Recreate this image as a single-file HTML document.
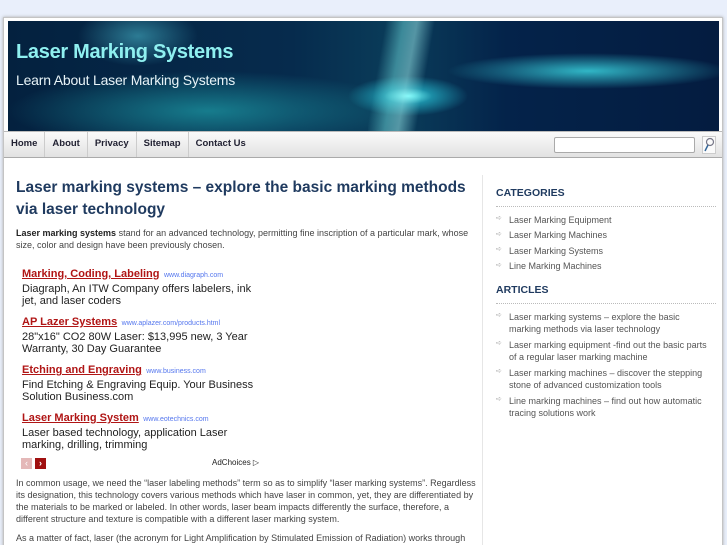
<!DOCTYPE html>
<html><head><meta charset="utf-8"><style>
*{margin:0;padding:0;box-sizing:border-box}
html,body{width:727px;height:545px;overflow:hidden}
body{background:#e9effb;font-family:"Liberation Sans",sans-serif;position:relative}
#wrap{position:absolute;left:3px;top:17px;width:720px;height:540px;background:#fff;border:1px solid #c4c4c4;border-bottom:none;box-shadow:0 0 3px #aaa}
#hdr{position:absolute;left:4px;top:3px;width:711px;height:111px;background:
radial-gradient(ellipse 60px 20px at 400px 75px,#7ff 0%,rgba(40,200,220,.6) 40%,transparent 100%),
radial-gradient(ellipse 200px 40px at 200px 90px,rgba(30,160,170,.7),transparent),
radial-gradient(ellipse 140px 18px at 580px 50px,rgba(60,220,230,.8),transparent),
radial-gradient(ellipse 60px 30px at 130px 15px,rgba(70,180,200,.6),transparent),
linear-gradient(90deg,#04213f,#062b4d 40%,#0a3d5a 55%,#04234a 70%,#041c40)}
#hdr .t{position:absolute;left:8px;top:20px;font-size:20px;color:#8ff0f0;font-weight:bold;letter-spacing:-.3px}
#hdr .s{position:absolute;left:8px;top:51px;font-size:14px;color:#e8f4f8;letter-spacing:-.2px}
#beam{position:absolute;left:360px;top:0;width:70px;height:111px;background:linear-gradient(100deg,transparent 20%,rgba(120,230,230,.45) 40%,rgba(160,240,240,.5) 55%,transparent 75%)}
#nav{position:absolute;left:0;top:113px;width:718px;height:27px;background:linear-gradient(#fafafa,#e2e2e2);border-top:1px solid #bbb;border-bottom:1px solid #aaa}
#nav a{float:left;height:25px;line-height:23px;font-size:9.5px;font-weight:bold;color:#223;padding:0 7px;border-right:1px solid #ccc;text-decoration:none}
#srch{position:absolute;left:550px;top:5px;width:141px;height:16px;background:#fff;border:1px solid #aaa;border-radius:2px}
#mag{position:absolute;left:698px;top:4px;width:14px;height:18px;background:#fafafa;border:1px solid #ccc}
#main{position:absolute;left:12px;top:159px;width:462px;color:#333}
h1{font-size:15.5px;color:#1f3a5f;line-height:22px;font-weight:bold}
p{font-size:9px;line-height:12px;color:#444}
.ad{margin-left:6px;margin-top:5px}
.ad a{font-size:11px;line-height:14px;color:#b01515;text-decoration:underline;font-weight:bold}
.ad span{font-size:7px;color:#5577ee}
.ad div{font-size:11px;color:#222;line-height:12px;width:235px;margin-top:1px}
#side{position:absolute;left:478px;top:157px;width:240px;height:390px;border-left:1px solid #e6e6e6}
#side h3{font-size:10.5px;color:#1f3a5f;margin:12px 0 0 13px;padding-bottom:7px;border-bottom:1px dotted #bbb;width:220px}
#side ul{list-style:none;margin:5px 0 0 13px}
#side li{font-size:9px;color:#555;line-height:12.5px;padding:1.5px 0 1.5px 13px;position:relative;width:212px}
#side li:before{content:"➪";position:absolute;left:0;top:1px;font-size:7px;color:#aaa}
</style></head><body>
<div id="wrap">
<div id="hdr"><div id="beam"></div><div class="t">Laser Marking Systems</div><div class="s">Learn About Laser Marking Systems</div></div>
<div id="nav"><a>Home</a><a>About</a><a>Privacy</a><a>Sitemap</a><a style="border:none">Contact Us</a><div id="srch"></div><div id="mag"><svg width="12" height="16"><circle cx="7" cy="5" r="3.5" fill="none" stroke="#778" stroke-width="1.2"/><path d="M5 8 L2 14" stroke="#369" stroke-width="1.5"/></svg></div></div>
<div id="main">
<h1>Laser marking systems – explore the basic marking methods via laser technology</h1>
<p style="margin-top:6px"><b style="color:#222">Laser marking systems</b> stand for an advanced technology, permitting fine inscription of a particular mark, whose size, color and design have been previously chosen.</p>
<div class="ad" style="margin-top:13px"><a>Marking, Coding, Labeling</a> <span>www.diagraph.com</span><div>Diagraph, An ITW Company offers labelers, ink jet, and laser coders</div></div>
<div class="ad"><a>AP Lazer Systems</a> <span>www.aplazer.com/products.html</span><div>28"x16" CO2 80W Laser: $13,995 new, 3 Year Warranty, 30 Day Guarantee</div></div>
<div class="ad"><a>Etching and Engraving</a> <span>www.business.com</span><div>Find Etching &amp; Engraving Equip. Your Business Solution Business.com</div></div>
<div class="ad"><a>Laser Marking System</a> <span>www.eotechnics.com</span><div>Laser based technology, application Laser marking, drilling, trimming</div></div>
<div style="position:relative;height:16px;margin-top:5px"><span style="position:absolute;left:5px;top:2px;width:11px;height:11px;background:#e4b8b8;color:#fff;font-size:9px;text-align:center;line-height:11px">‹</span><span style="position:absolute;left:19px;top:2px;width:11px;height:11px;background:#a01010;color:#fff;font-size:9px;text-align:center;line-height:11px;font-weight:bold">›</span><span style="position:absolute;left:196px;top:2px;font-size:8px;color:#222">AdChoices ▷</span></div>
<p style="margin-top:5px">In common usage, we need the “laser labeling methods” term so as to simplify “laser marking systems”. Regardless its designation, this technology covers various methods which have laser in common, yet, they are differentiated by the materials to be marked or labeled. In other words, laser beam impacts differently the surface, therefore, a different structure and texture is compatible with a different laser marking system.</p>
<p style="margin-top:7px">As a matter of fact, laser (the acronym for Light Amplification by Stimulated Emission of Radiation) works through</p>
</div>
<div id="side">
<h3>CATEGORIES</h3>
<ul><li>Laser Marking Equipment</li><li>Laser Marking Machines</li><li>Laser Marking Systems</li><li>Line Marking Machines</li></ul>
<h3 style="margin-top:10px">ARTICLES</h3>
<ul><li>Laser marking systems – explore the basic marking methods via laser technology</li><li>Laser marking equipment -find out the basic parts of a regular laser marking machine</li><li>Laser marking machines – discover the stepping stone of advanced customization tools</li><li>Line marking machines – find out how automatic tracing solutions work</li></ul>
</div>
</div>
</body></html>
